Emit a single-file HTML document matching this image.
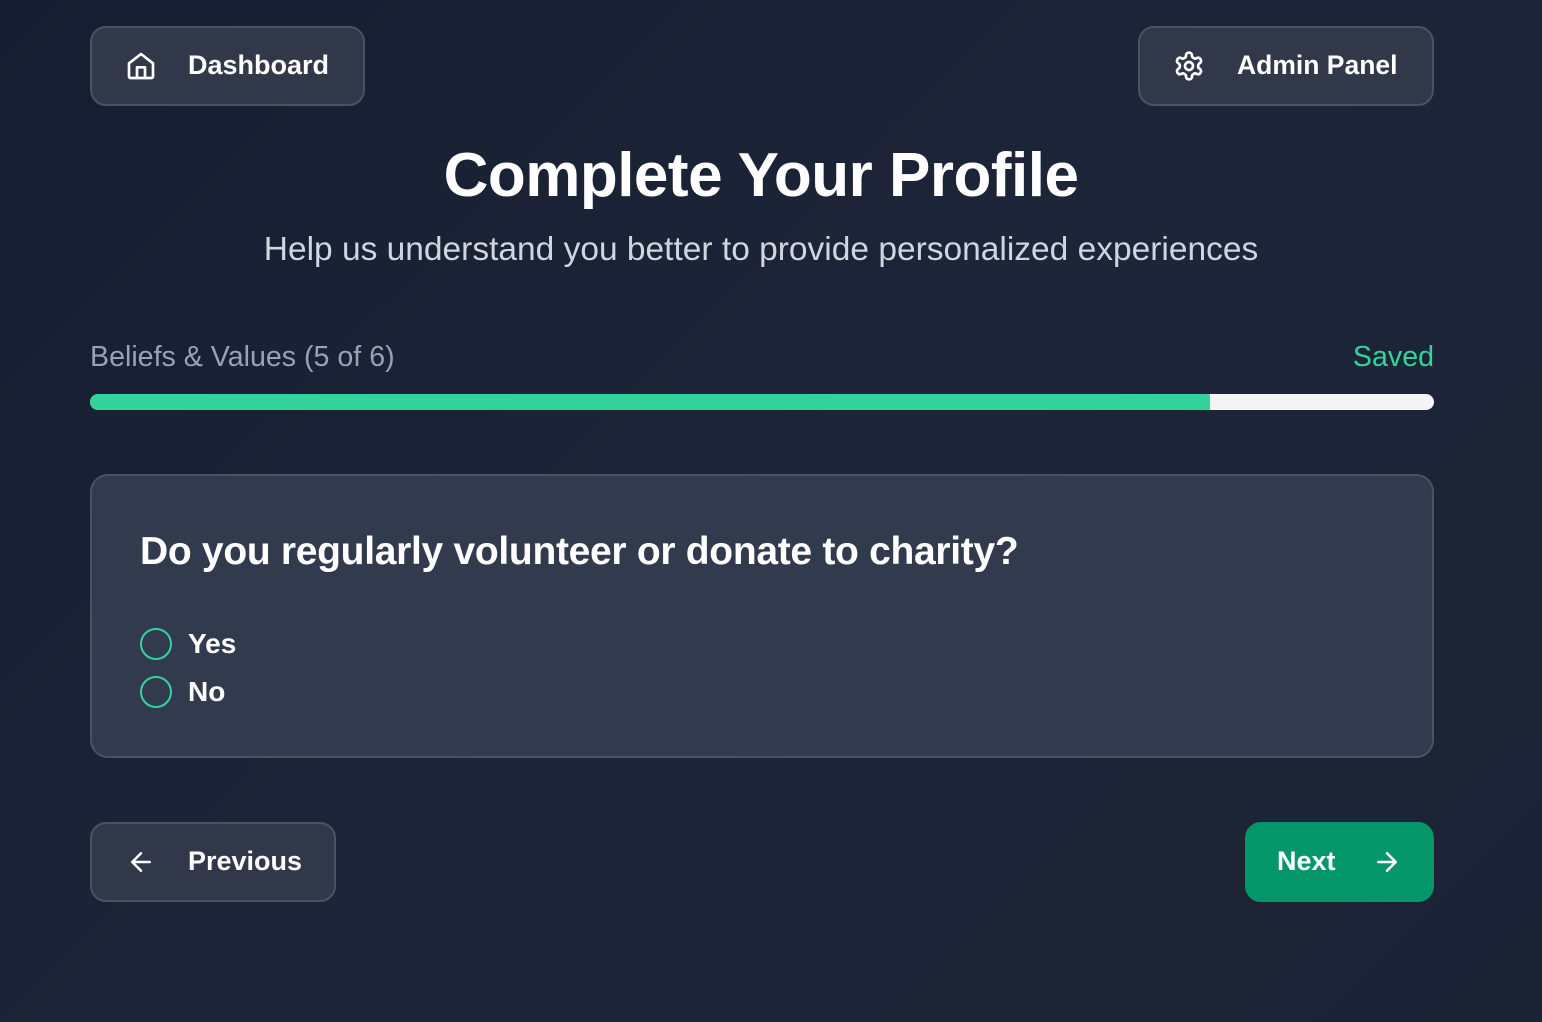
<!DOCTYPE html>
<html><head><meta charset="utf-8"><style>
*{box-sizing:border-box;margin:0;padding:0}
body{width:1542px;height:1022px;overflow:hidden;background:linear-gradient(135deg,#151d30 0%,#1d2538 50%,#1b2335 100%);font-family:"Liberation Sans",sans-serif;color:#fff;position:relative}
.btn{position:absolute;border:2px solid #4b5363;background:#30384a;border-radius:16px;display:flex;align-items:center;font-weight:bold;font-size:27px}
.btn svg{position:absolute}
.btn span{position:absolute}
</style></head><body>
<div class="btn" style="left:90px;top:26px;width:275px;height:80px">
<svg style="left:33px;top:22px" width="32" height="32" viewBox="0 0 24 24" fill="none" stroke="#fff" stroke-width="2" stroke-linecap="round" stroke-linejoin="round"><path d="M3 10l9-7 9 7v10a1 1 0 0 1-1 1H4a1 1 0 0 1-1-1z"/><path d="M9 21v-8h6v8"/></svg>
<span style="left:96px;top:22px">Dashboard</span></div>
<div class="btn" style="left:1138px;top:26px;width:296px;height:80px">
<svg style="left:33px;top:22px" width="32" height="32" viewBox="0 0 24 24" fill="none" stroke="#fff" stroke-width="2" stroke-linecap="round" stroke-linejoin="round"><path d="M12.22 2h-.44a2 2 0 0 0-2 2v.18a2 2 0 0 1-1 1.73l-.43.25a2 2 0 0 1-2 0l-.15-.08a2 2 0 0 0-2.730.73l-.22.38a2 2 0 0 0 .73 2.73l.15.1a2 2 0 0 1 1 1.72v.51a2 2 0 0 1-1 1.74l-.15.09a2 2 0 0 0-.73 2.73l.22.38a2 2 0 0 0 2.73.73l.15-.08a2 2 0 0 1 2 0l.43.25a2 2 0 0 1 1 1.73V20a2 2 0 0 0 2 2h.44a2 2 0 0 0 2-2v-.18a2 2 0 0 1 1-1.73l.43-.25a2 2 0 0 1 2 0l.15.08a2 2 0 0 0 2.73-.73l.22-.39a2 2 0 0 0-.73-2.73l-.15-.08a2 2 0 0 1-1-1.74v-.5a2 2 0 0 1 1-1.74l.15-.09a2 2 0 0 0 .73-2.730l-.22-.38a2 2 0 0 0-2.73-.73l-.15.08a2 2 0 0 1-2 0l-.43-.25a2 2 0 0 1-1-1.73V4a2 2 0 0 0-2-2z"/><circle cx="12" cy="12" r="3"/></svg>
<span style="left:97px;top:22px;font-size:26.5px">Admin Panel</span></div>
<div style="position:absolute;left:0;width:1542px;top:140px;text-align:center;font-size:62px;font-weight:bold;letter-spacing:-0.5px;padding-right:20px">Complete Your Profile</div>
<div style="position:absolute;left:0;width:1542px;top:231px;text-align:center;font-size:33.5px;color:#cfd6e0;padding-right:20px">Help us understand you better to provide personalized experiences</div>
<div style="position:absolute;left:90px;top:341px;font-size:28.6px;color:#99a2b3">Beliefs &amp; Values (5 of 6)</div>
<div style="position:absolute;right:108px;top:341px;font-size:28.6px;color:#34d399">Saved</div>
<div style="position:absolute;left:90px;top:394px;width:1344px;height:16px;border-radius:8px;background:#f3f4f6;overflow:hidden"><div style="width:1120px;height:100%;background:#34d399"></div></div>
<div style="position:absolute;left:90px;top:474px;width:1344px;height:284px;border:2px solid #4b5363;border-radius:18px;background:#323b4e"></div>
<div style="position:absolute;left:140px;top:530px;font-size:39px;font-weight:bold;letter-spacing:-0.3px">Do you regularly volunteer or donate to charity?</div>
<div style="position:absolute;left:140px;top:628px;width:32px;height:32px;border:2px solid #34d399;border-radius:50%"></div>
<div style="position:absolute;left:188px;top:628px;font-size:28px;font-weight:bold">Yes</div>
<div style="position:absolute;left:140px;top:676px;width:32px;height:32px;border:2px solid #34d399;border-radius:50%"></div>
<div style="position:absolute;left:188px;top:676px;font-size:28px;font-weight:bold">No</div>
<div class="btn" style="left:90px;top:822px;width:246px;height:80px">
<svg style="left:34px;top:23px" width="30" height="30" viewBox="0 0 24 24" fill="none" stroke="#fff" stroke-width="2" stroke-linecap="round" stroke-linejoin="round"><path d="M19 12H5M12 19l-7-7 7-7"/></svg>
<span style="left:96px;top:22px">Previous</span></div>
<div class="btn" style="left:1245px;top:822px;width:189px;height:80px;background:#059669;border-color:#059669">
<span style="left:30px;top:22px">Next</span>
<svg style="left:125px;top:23px" width="30" height="30" viewBox="0 0 24 24" fill="none" stroke="#fff" stroke-width="2" stroke-linecap="round" stroke-linejoin="round"><path d="M5 12h14M12 5l7 7-7 7"/></svg></div>
</body></html>
